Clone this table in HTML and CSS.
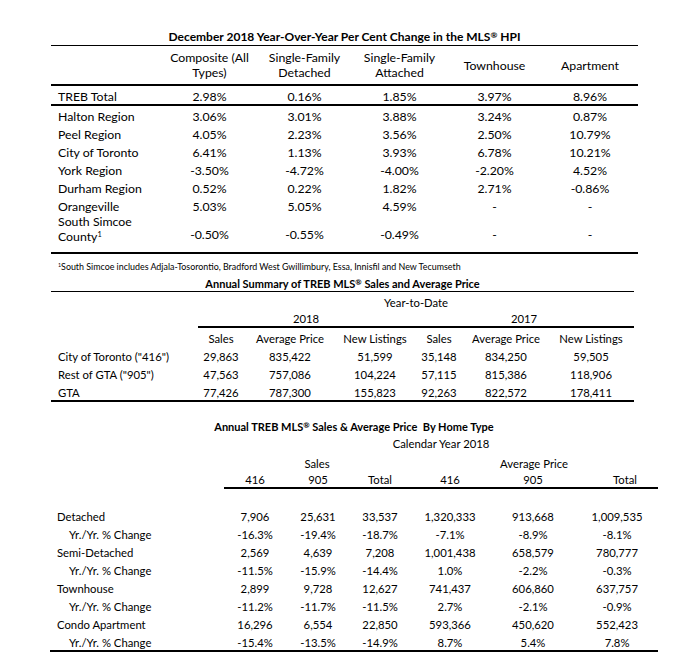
FILE: index.html
```html
<!DOCTYPE html>
<html lang="en">
<head>
<meta charset="utf-8">
<title>TREB MLS Summary</title>
<link rel="stylesheet" href="styles.css">
</head>
<body>
<div class="page">
  <section class="block hpi-block">
    <h2 class="title">December 2018 Year-Over-Year Per Cent Change in the MLS<span class="reg">®</span> HPI</h2>
    <table class="grid hpi">
      <colgroup>
        <col class="c-lbl1"><col class="c95"><col class="c95"><col class="c95"><col class="c95"><col class="c96">
      </colgroup>
      <thead>
        <tr class="hpi-head">
          <th></th>
          <th>Composite (All<br>Types)</th>
          <th>Single-Family<br>Detached</th>
          <th>Single-Family<br>Attached</th>
          <th>Townhouse</th>
          <th>Apartment</th>
        </tr>
      </thead>
      <tbody>
        <tr class="row total-row"><td class="lbl">TREB Total</td><td>2.98%</td><td>0.16%</td><td>1.85%</td><td>3.97%</td><td>8.96%</td></tr>
        <tr class="row"><td class="lbl">Halton Region</td><td>3.06%</td><td>3.01%</td><td>3.88%</td><td>3.24%</td><td>0.87%</td></tr>
        <tr class="row"><td class="lbl">Peel Region</td><td>4.05%</td><td>2.23%</td><td>3.56%</td><td>2.50%</td><td>10.79%</td></tr>
        <tr class="row"><td class="lbl">City of Toronto</td><td>6.41%</td><td>1.13%</td><td>3.93%</td><td>6.78%</td><td>10.21%</td></tr>
        <tr class="row"><td class="lbl">York Region</td><td>-3.50%</td><td>-4.72%</td><td>-4.00%</td><td>-2.20%</td><td>4.52%</td></tr>
        <tr class="row"><td class="lbl">Durham Region</td><td>0.52%</td><td>0.22%</td><td>1.82%</td><td>2.71%</td><td>-0.86%</td></tr>
        <tr class="row"><td class="lbl">Orangeville</td><td>5.03%</td><td>5.05%</td><td>4.59%</td><td>-</td><td>-</td></tr>
        <tr class="row simcoe-row"><td class="lbl lbl-top">South Simcoe<br>County<sup class="fn">1</sup></td><td>-0.50%</td><td>-0.55%</td><td>-0.49%</td><td>-</td><td>-</td></tr>
      </tbody>
    </table>
  </section>

  <p class="footnote"><sup class="fn">1</sup>South Simcoe includes Adjala-Tosorontio, Bradford West Gwillimbury, Essa, Innisfil and New Tecumseth</p>

  <section class="block small summary-block">
    <h2 class="title title-ruled">Annual Summary of TREB MLS<span class="reg">®</span> Sales and Average Price</h2>
    <table class="grid summary">
      <colgroup>
        <col class="c147"><col class="c46"><col class="c92"><col class="c78"><col class="c50"><col class="c84"><col class="c86">
      </colgroup>
      <thead>
        <tr class="ytd-row"><th></th><th colspan="6">Year-to-Date</th></tr>
        <tr class="year-row"><th></th><th colspan="3" class="ruled">2018</th><th colspan="3" class="ruled">2017</th></tr>
        <tr class="row"><th></th><th>Sales</th><th>Average Price</th><th>New Listings</th><th>Sales</th><th>Average Price</th><th>New Listings</th></tr>
      </thead>
      <tbody>
        <tr class="row"><td class="lbl">City of Toronto ("416")</td><td>29,863</td><td>835,422</td><td>51,599</td><td>35,148</td><td>834,250</td><td>59,505</td></tr>
        <tr class="row"><td class="lbl">Rest of GTA ("905")</td><td>47,563</td><td>757,086</td><td>104,224</td><td>57,115</td><td>815,386</td><td>118,906</td></tr>
        <tr class="row last-row"><td class="lbl">GTA</td><td>77,426</td><td>787,300</td><td>155,823</td><td>92,263</td><td>822,572</td><td>178,411</td></tr>
      </tbody>
    </table>
  </section>

  <section class="block small type-block">
    <h2 class="title">Annual TREB MLS<span class="reg">®</span> Sales &amp; Average Price&nbsp; By Home Type</h2>
    <table class="grid types">
      <colgroup>
        <col class="c174"><col class="c62"><col class="c64"><col class="c60"><col class="c80"><col class="c86"><col class="c82">
      </colgroup>
      <thead>
        <tr class="cal-row"><th></th><th colspan="6">Calendar Year 2018</th></tr>
        <tr class="group-row"><th></th><th colspan="3">Sales</th><th colspan="3">Average Price</th></tr>
        <tr class="sub-row"><th></th><th class="ruled">416</th><th class="ruled">905</th><th class="ruled">Total</th><th class="ruled">416</th><th class="ruled">905</th><th class="ruled total-head">Total</th></tr>
        <tr class="spacer-row"><th colspan="7"></th></tr>
      </thead>
      <tbody>
        <tr class="row"><td class="lbl">Detached</td><td>7,906</td><td>25,631</td><td>33,537</td><td>1,320,333</td><td>913,668</td><td>1,009,535</td></tr>
        <tr class="row"><td class="lbl sub">Yr./Yr. % Change</td><td>-16.3%</td><td>-19.4%</td><td>-18.7%</td><td>-7.1%</td><td>-8.9%</td><td>-8.1%</td></tr>
        <tr class="row"><td class="lbl">Semi-Detached</td><td>2,569</td><td>4,639</td><td>7,208</td><td>1,001,438</td><td>658,579</td><td>780,777</td></tr>
        <tr class="row"><td class="lbl sub">Yr./Yr. % Change</td><td>-11.5%</td><td>-15.9%</td><td>-14.4%</td><td>1.0%</td><td>-2.2%</td><td>-0.3%</td></tr>
        <tr class="row"><td class="lbl">Townhouse</td><td>2,899</td><td>9,728</td><td>12,627</td><td>741,437</td><td>606,860</td><td>637,757</td></tr>
        <tr class="row"><td class="lbl sub">Yr./Yr. % Change</td><td>-11.2%</td><td>-11.7%</td><td>-11.5%</td><td>2.7%</td><td>-2.1%</td><td>-0.9%</td></tr>
        <tr class="row"><td class="lbl">Condo Apartment</td><td>16,296</td><td>6,554</td><td>22,850</td><td>593,366</td><td>450,620</td><td>552,423</td></tr>
        <tr class="row last-row"><td class="lbl sub">Yr./Yr. % Change</td><td>-15.4%</td><td>-13.5%</td><td>-14.9%</td><td>8.7%</td><td>5.4%</td><td>7.8%</td></tr>
      </tbody>
    </table>
  </section>
</div>
</body>
</html>
```

FILE: styles.css
```css
html, body {
  margin: 0;
  padding: 0;
  background: #fff;
}

body {
  font-family: Lato, "Open Sans", "DejaVu Sans", sans-serif;
  font-size: 12.3px;
  color: #000;
}

.page {
  padding-top: 29px;
}

.block {
  display: flex;
  flex-direction: column;
}

.small {
  font-size: 11.3px;
}

.hpi-block {
  margin-left: 51px;
  width: 587px;
}

.summary-block {
  margin-left: 51px;
  width: 583px;
  margin-top: 2px;
}

.type-block {
  margin-left: 50px;
  width: 608px;
  margin-top: 17px;
}

.title {
  margin: 0;
  font-size: 12px;
  font-weight: 700;
  line-height: 15px;
  padding-bottom: 1px;
  text-align: center;
}

.small .title {
  font-size: 11px;
}

.title-ruled {
  border-bottom: 1px solid #000;
  line-height: 15px;
  padding-bottom: 0;
}

.reg {
  font-size: 0.7em;
  vertical-align: 0.35em;
  line-height: 0;
}

.fn {
  font-size: 0.6em;
  vertical-align: 0.5em;
  line-height: 0;
}

.grid {
  border-collapse: collapse;
  table-layout: fixed;
  width: 100%;
}

.grid th,
.grid td {
  padding: 3px 0 0 0;
  font-weight: 400;
  text-align: center;
  vertical-align: middle;
  line-height: 15px;
  white-space: nowrap;
}

.grid td.lbl {
  text-align: left;
  padding-left: 7px;
}

.grid td.sub {
  padding-left: 19px;
}

.grid td.lbl-top {
  vertical-align: top;
  padding-top: 0;
}

/* column widths */
.c-lbl1 { width: 111px; }
.c95 { width: 95px; }
.c96 { width: 96px; }
.c147 { width: 147px; }
.c46 { width: 46px; }
.c92 { width: 92px; }
.c78 { width: 78px; }
.c50 { width: 50px; }
.c84 { width: 84px; }
.c86 { width: 86px; }
.c174 { width: 174px; }
.c62 { width: 62px; }
.c64 { width: 64px; }
.c60 { width: 60px; }
.c80 { width: 80px; }
.c82 { width: 82px; }

.row {
  height: 18px;
}

/* HPI table */
.hpi-head {
  height: 39px;
  border-top: 1px solid #000;
  border-bottom: 2px solid #000;
}

.hpi-head th {
  padding-top: 1px;
}

.total-row {
  border-bottom: 2px solid #000;
}

.hpi tbody .row:not(.total-row):not(.simcoe-row) {
  height: 17.8px;
}

.simcoe-row {
  height: 39px;
  border-bottom: 2px solid #000;
}

.footnote {
  margin: 0;
  padding-left: 58px;
  font-size: 8.9px;
  line-height: 14px;
  padding-top: 6px;
}

/* summary table */
.ytd-row {
  height: 17px;
}

.year-row {
  height: 15px;
}

.year-row th {
  padding-top: 1px;
}

.ruled {
  border-bottom: 2px solid #000;
}

.last-row {
  border-bottom: 2px solid #000;
}

/* types table */
.cal-row {
  height: 16px;
}

.cal-row th {
  padding-top: 1px;
}

.group-row {
  height: 21px;
}

.group-row th {
  padding-top: 5px;
}

.sub-row {
  height: 16px;
}

.sub-row th {
  padding-top: 0;
}

.spacer-row {
  height: 18px;
}

.total-head {
  padding-left: 16px !important;
}
```
